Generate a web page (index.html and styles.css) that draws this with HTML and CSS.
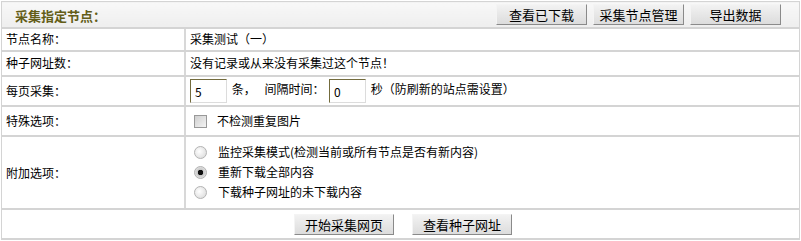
FILE: index.html
```html
<!DOCTYPE html>
<html lang="zh-CN">
<head>
  <meta charset="UTF-8" />
  <title>采集指定节点</title>
  <link rel="stylesheet" href="styles.css">
</head>
<body>
  <form class="panel">
    <table class="grid">
      <!-- 标题栏 -->
      <tr class="head">
        <td colspan="2">
          <div class="head-bar">
            <strong class="title">采集指定节点：</strong>
            <div class="tools">
              <button type="button" class="btn">查看已下载</button>
              <button type="button" class="btn">采集节点管理</button>
              <button type="button" class="btn">导出数据</button>
            </div>
          </div>
        </td>
      </tr>
      <tr class="r1">
        <td class="label">节点名称：</td>
        <td>采集测试（一）</td>
      </tr>
      <tr class="r2">
        <td class="label">种子网址数：</td>
        <td>没有记录或从来没有采集过这个节点！</td>
      </tr>
      <tr class="r3">
        <td class="label">每页采集：</td>
        <td>
          <input type="text" class="num" value="5"> <span class="gap">条，</span> 间隔时间：
          <input type="text" class="num num2" value="0"> 秒（防刷新的站点需设置）
        </td>
      </tr>
      <tr class="r4">
        <td class="label">特殊选项：</td>
        <td><label class="opt"><span class="box"></span>不检测重复图片</label></td>
      </tr>
      <tr class="r5">
        <td class="label">附加选项：</td>
        <td>
          <label class="opt"><span class="radio"></span>监控采集模式(检测当前或所有节点是否有新内容)</label>
          <label class="opt"><span class="radio on"></span>重新下载全部内容</label>
          <label class="opt"><span class="radio"></span>下载种子网址的未下载内容</label>
        </td>
      </tr>
      <tr class="foot">
        <td colspan="2">
          <div class="foot-bar">
            <button type="button" class="btn">开始采集网页</button>
            <button type="button" class="btn">查看种子网址</button>
          </div>
        </td>
      </tr>
    </table>
  </form>
</body>
</html>
```

FILE: styles.css
```css
body {margin:0; padding:1px; font:12px/1.2 "Noto Sans CJK SC", "Liberation Sans", sans-serif; color:#000; background:#fff;}

.panel {margin:0; width:799px;}
.grid {width:799px; border-collapse:collapse; border:1px solid #d4d4d4; border-bottom:2px dotted #d0d0d0;}
.grid td {border:1px solid #d4d4d4; border-width:0 0 2px 0; padding:0 0 0 4px; vertical-align:middle;}
.grid td.label {width:178px; border-right:2px solid #d8d8d8;}

/* 标题栏 */
.head td {height:25px; padding:0; background:linear-gradient(#f8f8f8, #eeeeee);}
.head-bar {display:flex; align-items:center; justify-content:space-between; padding:0 18px 0 13px;}
.title {color:#635d18; font-size:13px; font-weight:bold; padding-top:2px;}
.tools {display:flex; gap:6px;}

/* 按钮 */
.btn {
  height:21px; width:91px; padding:0; font:13px "Noto Sans CJK SC", sans-serif; color:#000;
  background:linear-gradient(#f2f2f2, #dcdcdc); cursor:pointer;
  border:1px solid; border-color:#f4f4f4 #8a8a8a #8a8a8a #f4f4f4;
}

.r1 td {height:21px;}
.r2 td {height:23px;}
.r3 td {height:28px;}
.r4 td {height:28px;}
.r5 td {height:69px;}
.r5 td.label {padding-top:2px;}

/* 输入框 */
.num {
  margin:0 2px 0 0; padding:0 0 0 4px; box-sizing:border-box; width:37px; height:24px;
  font:12px "Noto Sans CJK SC", sans-serif; vertical-align:middle;
  border:1px solid; border-color:#736b3c #dcdcdc #dcdcdc #736b3c;
}
.gap {margin-right:6px;}
.num2 {margin-left:2px;}

/* 选项 */
.opt {display:flex; align-items:center; height:20px; padding-left:4px;}
.box {width:11px; height:11px; border:1px solid #999; margin-right:10px; background:linear-gradient(135deg, #cfcfcf, #f4f4f4);}
.radio {width:11px; height:11px; border:1px solid #b4b4b4; border-radius:50%; margin-right:11px; background:radial-gradient(circle at 40% 40%, #fff, #d6d6d6);}
.radio.on {background:radial-gradient(circle, #111 0 2.5px, #c8c8c8 3px, #f4f4f4);}

/* 底部按钮 */
.foot td {height:28px; padding:0;}
.foot-bar {display:flex; gap:18px; padding-left:292px;}
.foot-bar .btn {width:100px;}
```
